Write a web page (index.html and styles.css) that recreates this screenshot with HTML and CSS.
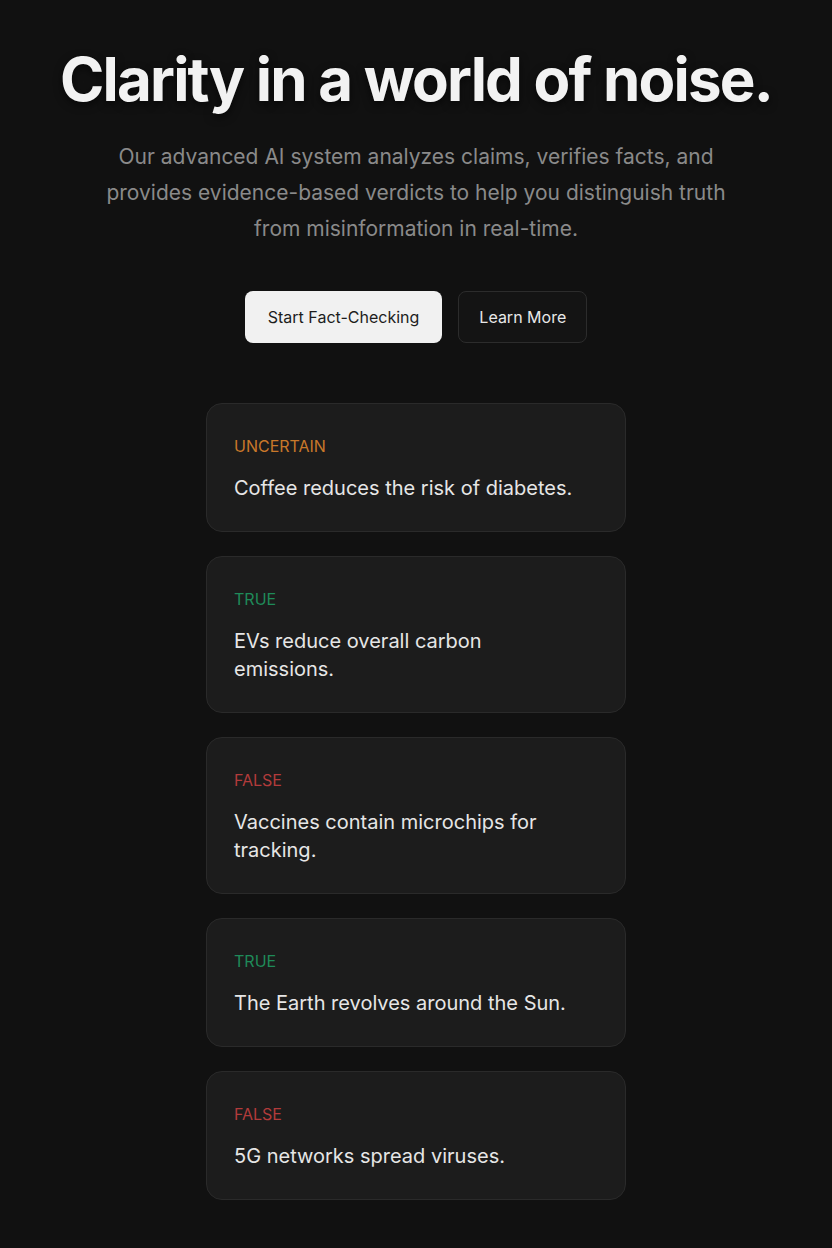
FILE: index.html
```html
<!DOCTYPE html>
<html lang="en">

<head>
    <meta charset="UTF-8">
    <meta name="viewport" content="width=device-width, initial-scale=1.0">
    <title>Clarity in a world of noise</title>
    <link rel="stylesheet" href="styles.css">
</head>

<body>
    <section class="hero">
        <h1>Clarity in a world of noise.</h1>
        <p class="lead">Our advanced AI system analyzes claims, verifies facts, and provides evidence-based verdicts to help you distinguish truth from misinformation in real-time.</p>
        <div class="actions">
            <a class="btn btn-primary" href="#">Start Fact-Checking</a>
            <a class="btn btn-outline" href="#">Learn More</a>
        </div>
    </section>

    <div class="claims">
        <div class="claim-card">
            <span class="verdict uncertain">UNCERTAIN</span>
            <p class="claim">Coffee reduces the risk of diabetes.</p>
        </div>
        <div class="claim-card">
            <span class="verdict true">TRUE</span>
            <p class="claim">EVs reduce overall carbon emissions.</p>
        </div>
        <div class="claim-card">
            <span class="verdict false">FALSE</span>
            <p class="claim">Vaccines contain microchips for tracking.</p>
        </div>
        <div class="claim-card">
            <span class="verdict true">TRUE</span>
            <p class="claim">The Earth revolves around the Sun.</p>
        </div>
        <div class="claim-card">
            <span class="verdict false">FALSE</span>
            <p class="claim">5G networks spread viruses.</p>
        </div>
    </div>
</body>

</html>
```

FILE: styles.css
```css
* {
    margin: 0;
    padding: 0;
    box-sizing: border-box;
}

body {
    font-family: Inter, "Noto Sans", Arial, sans-serif;
    background-color: #111111;
    color: #e6e6e6;
    min-height: 100vh;
    padding: 46px 0 48px;
}

.hero {
    display: flex;
    flex-direction: column;
    align-items: center;
    text-align: center;
}

.hero h1 {
    font-size: 60px;
    font-weight: 700;
    line-height: 66px;
    letter-spacing: -1.8px;
    color: #f2f2f2;
    text-shadow: 0 3px 8px rgba(0, 0, 0, 0.6);
}

.lead {
    max-width: 640px;
    margin-top: 27px;
    font-size: 21px;
    line-height: 36px;
    color: #8a8a8a;
}

.actions {
    display: flex;
    gap: 16px;
    margin-top: 44px;
}

.btn {
    display: inline-flex;
    align-items: center;
    height: 52px;
    padding: 0 20px;
    border-radius: 8px;
    font-size: 16px;
    text-decoration: none;
}

.btn-primary {
    padding: 0 23px;
    background-color: #f1f1f1;
    color: #1d1d1d;
}

.btn-outline {
    border: 1px solid #2c2c2c;
    background-color: #141414;
    color: #e8e8e8;
}

.claims {
    display: flex;
    flex-direction: column;
    gap: 24px;
    width: 420px;
    margin: 60px auto 0;
}

.claim-card {
    display: flex;
    flex-direction: column;
    gap: 18px;
    padding: 32px 28px 29px 27px;
    background-color: #1c1c1c;
    border: 1px solid #2a2a2a;
    border-radius: 16px;
}

.verdict {
    font-size: 16px;
    line-height: 20px;
}

.verdict.uncertain {
    color: #c8782a;
}

.verdict.true {
    color: #1f8a59;
}

.verdict.false {
    color: #b23b3b;
}

.claim {
    max-width: 345px;
    font-size: 20px;
    line-height: 28px;
    color: #e6e6e6;
}
```
